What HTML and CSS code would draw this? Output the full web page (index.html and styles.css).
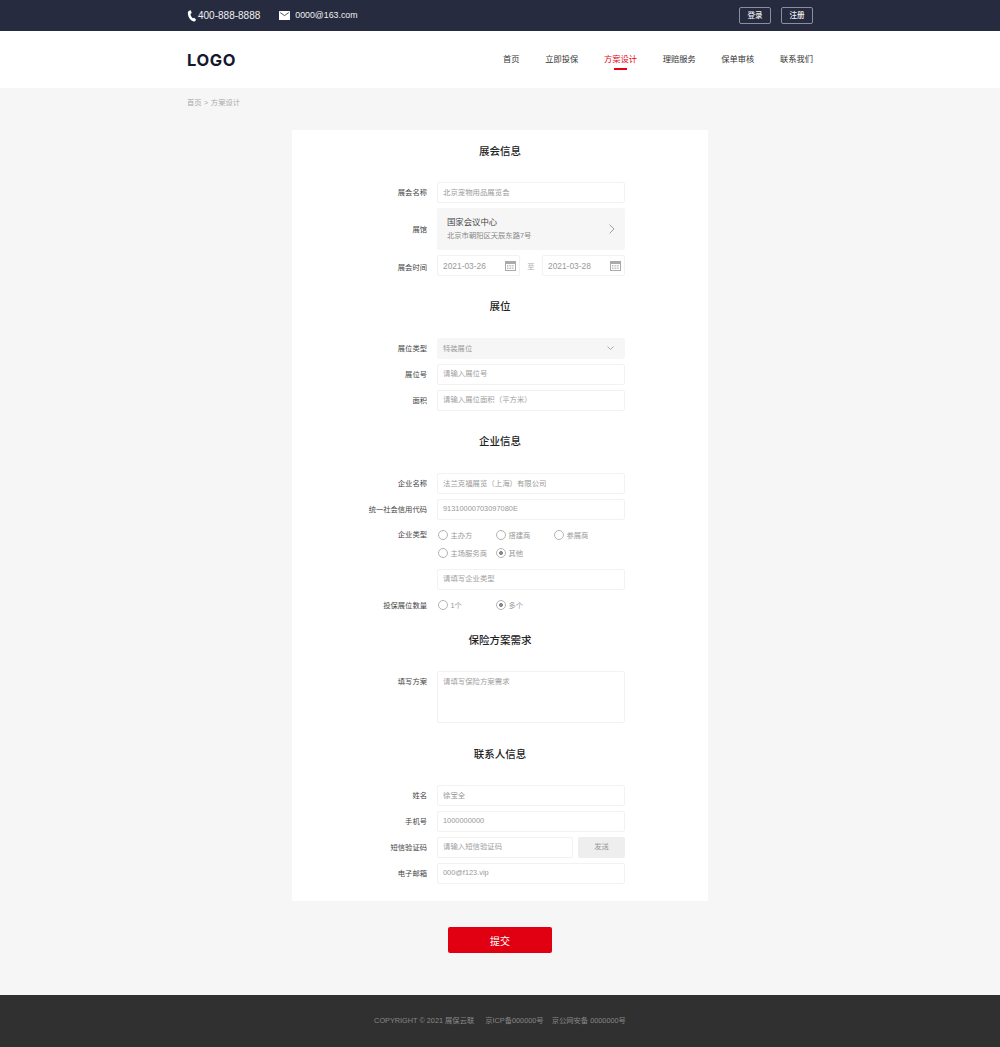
FILE: index.html
```html
<!DOCTYPE html>
<html lang="en">
<head>
    <meta charset="UTF-8">
    <meta name="viewport" content="width=device-width, initial-scale=1.0">
    <title>方案设计</title>
    <link rel="stylesheet" href="styles.css">
</head>
<body>
    <div class="topbar">
        <div class="wrap topbar-inner">
            <div class="contact">
                <span class="contact-item">
                    <svg class="icon-phone" viewBox="0 0 12 14" width="10" height="12"><path d="M2.6 0.6 L4.6 0.2 L5.6 3.4 L4.2 4.6 C4.3 6.4 5.4 8.6 6.8 9.6 L8.6 9 L11 11.6 L9.6 13.2 C8.4 14 6.6 13.6 5 12.2 C2.6 10 0.8 6.6 1 3.2 C1.1 2 1.7 1 2.6 0.6 Z" fill="#fff"/></svg>
                    400-888-8888
                </span>
                <span class="contact-item contact-mail">
                    <svg viewBox="0 0 11 9" width="11" height="9"><path d="M0.6 0 H10.4 Q11 0 11 0.6 V8.4 Q11 9 10.4 9 H0.6 Q0 9 0 8.4 V0.6 Q0 0 0.6 0 Z" fill="#fff"/><path d="M1.2 1.6 L5.5 4.6 L9.8 1.6" fill="none" stroke="#272b40" stroke-width="0.8"/></svg>
                    0000@163.com
                </span>
            </div>
            <div class="auth">
                <a class="auth-btn">登录</a>
                <a class="auth-btn">注册</a>
            </div>
        </div>
    </div>

    <div class="header">
        <div class="wrap header-inner">
            <div class="logo">LOGO</div>
            <div class="nav">
                <a>首页</a>
                <a>立即投保</a>
                <a class="active">方案设计</a>
                <a>理赔服务</a>
                <a>保单审核</a>
                <a>联系我们</a>
            </div>
        </div>
    </div>

    <div class="wrap crumbs">首页<span class="crumb-sep">&gt;</span>方案设计</div>

    <div class="card">
        <div class="section section-first">
            <h2>展会信息</h2>
            <div class="row">
                <label>展会名称</label>
                <input type="text" class="field" value="北京宠物用品展览会">
            </div>
            <div class="row row-plain">
                <label>展馆</label>
                <div class="venue">
                    <div>
                        <div class="venue-name">国家会议中心</div>
                        <div class="venue-addr">北京市朝阳区天辰东路7号</div>
                    </div>
                    <svg viewBox="0 0 6 10" width="6" height="10"><path d="M0.6 0.6 L5 5 L0.6 9.4" fill="none" stroke="#888" stroke-width="0.8"/></svg>
                </div>
            </div>
            <div class="row row-dates">
                <label>展会时间</label>
                <div class="dates">
                    <div class="date field">2021-03-26
                        <svg viewBox="0 0 11 11" width="11" height="11"><rect x="0.5" y="1.5" width="10" height="9" fill="none" stroke="#aaa"/><rect x="0.5" y="1.5" width="10" height="2.5" fill="#aaa"/><path d="M2 5.5H9M2 7H9M2 8.5H9" stroke="#bbb" stroke-dasharray="1 0.6"/></svg>
                    </div>
                    <span class="to">至</span>
                    <div class="date field">2021-03-28
                        <svg viewBox="0 0 11 11" width="11" height="11"><rect x="0.5" y="1.5" width="10" height="9" fill="none" stroke="#aaa"/><rect x="0.5" y="1.5" width="10" height="2.5" fill="#aaa"/><path d="M2 5.5H9M2 7H9M2 8.5H9" stroke="#bbb" stroke-dasharray="1 0.6"/></svg>
                    </div>
                </div>
            </div>
        </div>

        <div class="section">
            <h2>展位</h2>
            <div class="row">
                <label>展位类型</label>
                <div class="select">特装展位
                    <svg viewBox="0 0 7 4" width="7" height="4"><path d="M0.5 0.5 L3.5 3.5 L6.5 0.5" fill="none" stroke="#999" stroke-width="0.8"/></svg>
                </div>
            </div>
            <div class="row">
                <label>展位号</label>
                <input type="text" class="field" placeholder="请输入展位号">
            </div>
            <div class="row">
                <label>面积</label>
                <input type="text" class="field" placeholder="请输入展位面积（平方米）">
            </div>
        </div>

        <div class="section">
            <h2>企业信息</h2>
            <div class="row">
                <label>企业名称</label>
                <input type="text" class="field" value="法兰克福展览（上海）有限公司">
            </div>
            <div class="row">
                <label>统一社会信用代码</label>
                <input type="text" class="field" value="91310000703097080E">
            </div>
            <div class="row row-radios">
                <label>企业类型</label>
                <div class="radios">
                    <span class="radio">主办方</span>
                    <span class="radio">搭建商</span>
                    <span class="radio">参展商</span>
                    <span class="radio">主场服务商</span>
                    <span class="radio checked">其他</span>
                </div>
            </div>
            <div class="row">
                <label></label>
                <input type="text" class="field" placeholder="请填写企业类型">
            </div>
            <div class="row row-plain">
                <label>投保展位数量</label>
                <div class="radios radios-one">
                    <span class="radio">1个</span>
                    <span class="radio checked">多个</span>
                </div>
            </div>
        </div>

        <div class="section section-plan">
            <h2>保险方案需求</h2>
            <div class="row row-top">
                <label>填写方案</label>
                <textarea class="field area" placeholder="请填写保险方案需求"></textarea>
            </div>
        </div>

        <div class="section section-contact">
            <h2>联系人信息</h2>
            <div class="row">
                <label>姓名</label>
                <input type="text" class="field" value="徐宝全">
            </div>
            <div class="row">
                <label>手机号</label>
                <input type="text" class="field" value="1000000000">
            </div>
            <div class="row">
                <label>短信验证码</label>
                <div class="sms">
                    <input type="text" class="field" placeholder="请输入短信验证码">
                    <a class="send">发送</a>
                </div>
            </div>
            <div class="row">
                <label>电子邮箱</label>
                <input type="text" class="field" value="000@f123.vip">
            </div>
        </div>
    </div>

    <button class="submit">提交</button>

    <div class="footer">COPYRIGHT © 2021 展保云联<span class="gap-a"></span>京ICP备000000号<span class="gap-b"></span>京公网安备 0000000号</div>
</body>
</html>
```

FILE: styles.css
```css
* { box-sizing: border-box; }
body { margin: 0; background: #f6f6f6; font-family: "Liberation Sans", "Noto Sans CJK SC", sans-serif; font-size: 7.3px; color: #444; }
.wrap { width: 626px; margin: 0 auto; }

.topbar { height: 31px; background: #272b40; color: #f0f0f0; }
.topbar-inner { height: 31px; display: flex; justify-content: space-between; align-items: center; }
.contact { display: flex; font-size: 10px; }
.contact-item { display: flex; align-items: center; gap: 1px; }
.contact-mail { margin-left: 19px; gap: 5px; margin-top: -1px; font-size: 8.8px; font-weight: 400; }
.auth { display: flex; gap: 10px; }
.auth-btn { width: 32px; height: 17px; border: 1px solid #8b8e9c; border-radius: 2px; font-size: 7.5px; line-height: 15px; text-align: center; font-weight: 500; }

.header { height: 57px; background: #fff; }
.header-inner { height: 57px; display: flex; justify-content: space-between; align-items: center; }
.logo { font-family: Inter, sans-serif; font-size: 16.5px; font-weight: 700; color: #14172e; letter-spacing: 0.6px; }
.nav { display: flex; gap: 25.7px; font-size: 8.25px; color: #333; }
.nav a { position: relative; line-height: 15px; }
.nav .active { color: #e60012; }
.nav .active::after { content: ""; position: absolute; left: 10px; right: 10px; bottom: -3px; height: 2px; background: #e60012; }

.crumbs { height: 42px; padding-top: 9px; line-height: 12px; color: #aaa; }
.crumb-sep { margin: 0 2.5px; }

.card { width: 416px; height: 771px; margin: 0 auto; padding-top: 11px; background: #fff; }
.section { margin-bottom: 20px; }
.section-plan { margin-top: -5px; margin-bottom: 21px; }
.section h2 { height: 20px; margin: 0 0 22px; font-size: 10.5px; line-height: 20px; font-weight: 500; color: #222; text-align: center; }
.section-first h2, .section-plan h2, .section-contact h2 { margin-bottom: 21px; }

.row { display: flex; align-items: center; margin-bottom: 5px; }
.row:last-child { margin-bottom: 0; }
.row label { width: 135px; margin-right: 10px; padding-bottom: 2px; text-align: right; color: #444; flex-shrink: 0; }
.row-plain label { padding-bottom: 0; }
.row-dates label { padding: 2px 0 0; }
.row-top { align-items: flex-start; }
.row-top label { padding: 6px 0 0; line-height: 10px; }
.row-radios { margin-bottom: 7px; margin-top: 6px; align-items: flex-start; }
.row-radios label { padding: 4px 0 0; line-height: 10px; }

.field { width: 188px; height: 21px; padding: 0 5px 2px; border: 1px solid #f2f2f2; border-radius: 2px; background: #fff; font-family: inherit; font-size: 7.4px; color: #999; outline: none; }
.field::placeholder { color: #a0a0a0; opacity: 1; }
.area { height: 52px; padding-top: 3px; resize: none; display: block; }

.venue { width: 188px; height: 42px; padding: 0 10px; display: flex; justify-content: space-between; align-items: center; background: #f6f6f6; border-radius: 2px; }
.venue-name { font-size: 8.4px; line-height: 13px; color: #444; }
.venue-addr { line-height: 13px; color: #888; }

.dates { display: flex; width: 188px; justify-content: space-between; align-items: center; }
.date { width: 83px; padding: 0 3px 0 5px; display: flex; justify-content: space-between; align-items: center; font-size: 8.4px; }
.to { color: #aaa; }

.select { width: 188px; height: 21px; padding: 0 11px 2px 6px; display: flex; justify-content: space-between; align-items: center; background: #f6f6f6; border-radius: 2px; color: #999; }

.radios { width: 188px; display: flex; flex-wrap: wrap; }
.radios .radio { width: 58px; height: 18px; display: flex; align-items: center; color: #999; }
.radios-one .radio { height: 20px; }
.radio::before { content: ""; width: 8px; height: 8px; margin: 0 2.5px 0 1px; border: 1px solid #b4b4b4; border-radius: 50%; background: #fff; flex-shrink: 0; }
.radio.checked::before { background: radial-gradient(circle, #888 0 1.8px, #fff 2.2px); }

.sms { width: 188px; display: flex; justify-content: space-between; }
.sms .field { width: 136px; }
.send { width: 47px; height: 21px; background: #eee; border-radius: 2px; line-height: 20px; text-align: center; color: #999; }

.submit { display: block; width: 104px; height: 26px; margin: 26px auto 42px; border: none; border-radius: 2px; background: #e00012; color: #fff; font-family: inherit; font-size: 10px; }

.footer { height: 52px; background: #303030; line-height: 52px; text-align: center; color: #888; font-size: 7.3px; }
.gap-a { display: inline-block; width: 11px; }
.gap-b { display: inline-block; width: 8px; }
```
